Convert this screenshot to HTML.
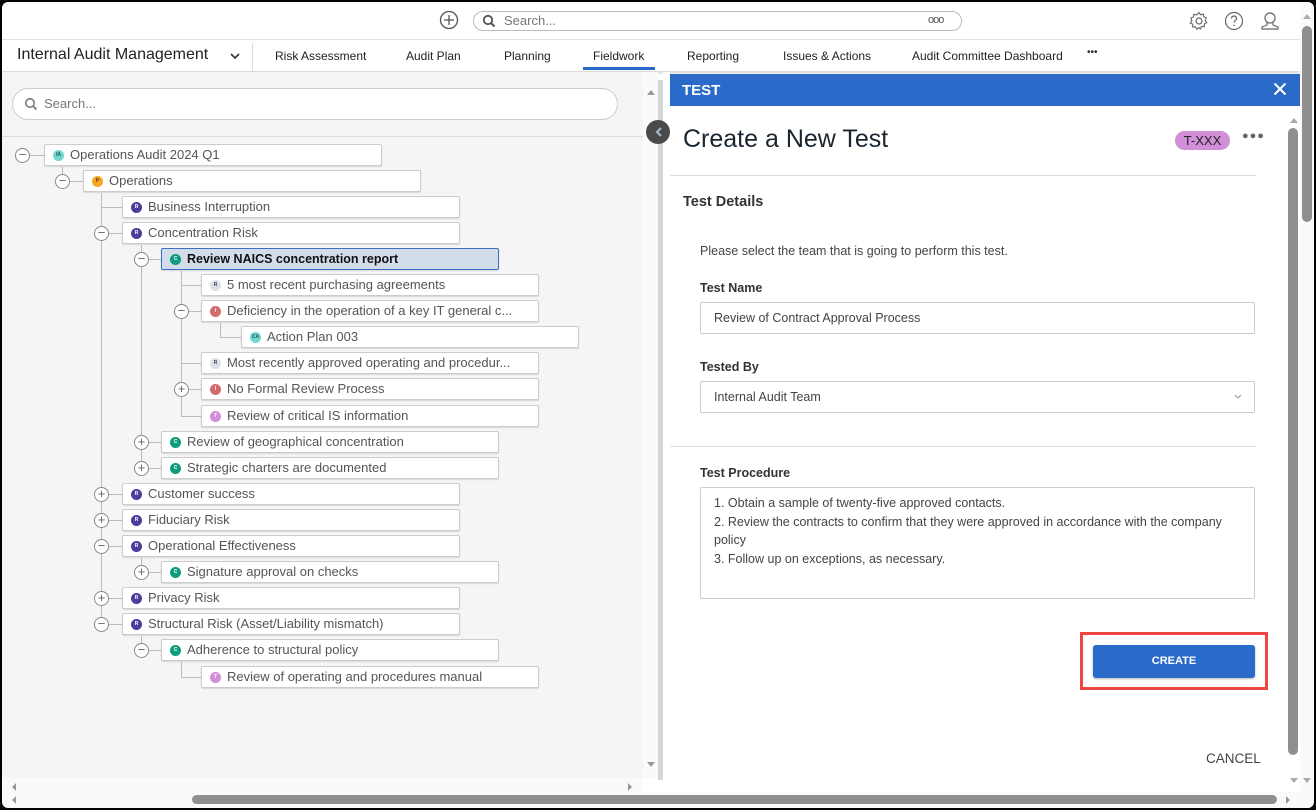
<!DOCTYPE html>
<html><head><meta charset="utf-8"><style>
*{box-sizing:border-box;margin:0;padding:0}
body{width:1316px;height:810px;overflow:hidden;background:#000;font-family:"Liberation Sans",sans-serif;position:relative}
.a{position:absolute}
#win{position:absolute;left:0;top:0;width:1316px;height:810px;background:#fff;overflow:hidden}
#frame{position:absolute;left:0;top:0;width:1316px;height:810px;border:2px solid #000;border-radius:8px;pointer-events:none;box-shadow:0 0 0 3px #000}
.nav span{position:absolute;top:48px;font-size:12px;color:#222}
.box{position:absolute;height:22px;width:338px;background:#fff;border:1px solid #ccc;border-radius:2px;box-shadow:0 1px 1px rgba(0,0,0,.12);font-size:13px;color:#555;line-height:20px;padding-left:25px;white-space:nowrap}
.box i{position:absolute;left:8px;top:5px;width:11px;height:11px;border-radius:50%;font-style:normal;font-size:5px;color:#fff;text-align:center;line-height:11px;font-weight:bold}
.sel{background:#d2dcea;border-color:#3b6fc4;color:#111}
.tg{position:absolute;width:15px;height:15px;border:1px solid #888;border-radius:50%;background:#fff;font-size:13px;line-height:12px;text-align:center;color:#666}
.vl{position:absolute;width:1px;background:#bbb}
.hl{position:absolute;height:1px;background:#bbb}
.lbl{position:absolute;left:700px;font-size:12.5px;font-weight:bold;color:#333}
.inp{position:absolute;left:700px;width:555px;border:1px solid #ccc;border-radius:2px;font-size:12.5px;color:#444;padding-left:13px}
</style></head><body>
<div id="win">
<div class="a" style="left:0;top:0;width:1316px;height:40px;border-bottom:1px solid #e2e2e2"></div>
<svg class="a" style="left:439px;top:10px" width="20" height="20"><circle cx="10" cy="10" r="8.5" fill="none" stroke="#555" stroke-width="1.3"/><path d="M10 5v10M5 10h10" stroke="#555" stroke-width="1.3"/></svg>
<div class="a" style="left:473px;top:11px;width:489px;height:20px;border:1px solid #bbb;border-radius:10px"></div>
<svg class="a" style="left:482px;top:14px" width="14" height="14"><circle cx="6" cy="6" r="4.2" fill="none" stroke="#555" stroke-width="1.8"/><path d="M9 9l3.5 3.5" stroke="#555" stroke-width="2"/></svg>
<div class="a" style="left:504px;top:13px;font-size:13px;color:#777">Search...</div>
<div class="a" style="left:928px;top:14px;font-size:11px;color:#555;letter-spacing:-1px">ooo</div>
<svg class="a" style="left:1189px;top:11px" width="20" height="20"><circle cx="10" cy="10" r="3" fill="none" stroke="#666" stroke-width="1.2"/><path d="M10 1.5l1.6 2.3 2.7-.8.4 2.8 2.6 1-1.1 2.6 1.6 2.3-2.5 1.2.1 2.8-2.8-.2-1.3 2.5L10 16.6l-2.2 1.7-1.3-2.5-2.8.2.1-2.8-2.5-1.2 1.6-2.3L1.8 7l2.6-1 .4-2.8 2.7.8z" fill="none" stroke="#666" stroke-width="1.1"/></svg>
<svg class="a" style="left:1224px;top:11px" width="20" height="20"><circle cx="10" cy="10" r="8.5" fill="none" stroke="#666" stroke-width="1.2"/><path d="M7.5 7.5a2.5 2.5 0 1 1 3.5 2.3c-.8.4-1 .9-1 1.7" fill="none" stroke="#666" stroke-width="1.2"/><circle cx="10" cy="14.3" r=".8" fill="#666"/></svg>
<svg class="a" style="left:1259px;top:10px" width="22" height="22"><circle cx="11" cy="8" r="5" fill="none" stroke="#666" stroke-width="1.2"/><path d="M8 12.5v2.5l-5 2v2h16v-2l-5-2v-2.5" fill="none" stroke="#666" stroke-width="1.2"/></svg>
<div class="a" style="left:0;top:41px;width:1300px;height:30px;background:#fff;box-shadow:0 2px 3px rgba(0,0,0,.18)"></div>
<div class="a" style="left:17px;top:46px;font-size:16px;color:#222">Internal Audit Management</div>
<svg class="a" style="left:229px;top:51px" width="12" height="10"><path d="M2 3l4 4 4-4" fill="none" stroke="#333" stroke-width="1.6"/></svg>
<div class="a" style="left:252px;top:43px;width:1px;height:28px;background:#ddd"></div>
<div class="nav"><span style="left:275px;top:49px">Risk Assessment</span><span style="left:406px;top:49px">Audit Plan</span><span style="left:504px;top:49px">Planning</span><span style="left:593px;top:49px">Fieldwork</span><span style="left:687px;top:49px">Reporting</span><span style="left:783px;top:49px">Issues &amp; Actions</span><span style="left:912px;top:49px">Audit Committee Dashboard</span><span style="left:1087px;font-size:10px;top:47px">•••</span></div>
<div class="a" style="left:583px;top:67px;width:72px;height:3px;background:#2a6ac8"></div>
<div class="a" style="left:0;top:72px;width:643px;height:706px;background:#f5f5f7"></div>
<div class="a" style="left:643px;top:72px;width:15px;height:706px;background:#fafafa"></div>
<div class="a" style="left:658px;top:80px;width:5px;height:700px;background:#d4d7db"></div>
<div class="a" style="left:663px;top:72px;width:7px;height:706px;background:#fff"></div>
<div class="a" style="left:647px;top:90px;width:0;height:0;border-left:4px solid transparent;border-right:4px solid transparent;border-bottom:5px solid #999"></div>
<div class="a" style="left:647px;top:762px;width:0;height:0;border-left:4px solid transparent;border-right:4px solid transparent;border-top:5px solid #999"></div>
<div class="a" style="left:12px;top:88px;width:606px;height:32px;border:1px solid #ccc;border-radius:16px;background:#fff"></div>
<svg class="a" style="left:24px;top:97px" width="14" height="14"><circle cx="6" cy="6" r="4.2" fill="none" stroke="#888" stroke-width="1.8"/><path d="M9 9l3.5 3.5" stroke="#888" stroke-width="2"/></svg>
<div class="a" style="left:44px;top:96px;font-size:13px;color:#777">Search...</div>
<div class="a" style="left:0;top:136px;width:643px;height:1px;background:#ddd"></div>
<div class="a" style="left:646px;top:120px;width:24px;height:24px;border-radius:50%;background:#4a4a4a"></div>
<svg class="a" style="left:653px;top:126px" width="12" height="12"><path d="M8 2L4 6l4 4" fill="none" stroke="#aab4c4" stroke-width="2.2"/></svg>
<div style="position:absolute;left:2px;top:2px;width:700px;height:700px">
<div class="vl" style="left:60px;top:165px;height:14px"></div>
<div class="vl" style="left:99px;top:191px;height:431px"></div>
<div class="vl" style="left:139px;top:243px;height:223px"></div>
<div class="vl" style="left:139px;top:556px;height:14px"></div>
<div class="vl" style="left:139px;top:634px;height:14px"></div>
<div class="vl" style="left:179px;top:269px;height:145px"></div>
<div class="vl" style="left:179px;top:660px;height:15px"></div>
<div class="vl" style="left:218px;top:321px;height:14px"></div>
<div class="hl" style="left:20px;top:153px;width:22px"></div>
<div class="hl" style="left:60px;top:179px;width:22px"></div>
<div class="hl" style="left:99px;top:205px;width:22px"></div><div class="hl" style="left:99px;top:231px;width:22px"></div>
<div class="hl" style="left:139px;top:257px;width:22px"></div>
<div class="hl" style="left:179px;top:283px;width:22px"></div><div class="hl" style="left:179px;top:309px;width:22px"></div>
<div class="hl" style="left:218px;top:335px;width:22px"></div>
<div class="hl" style="left:179px;top:361px;width:22px"></div><div class="hl" style="left:179px;top:387px;width:22px"></div><div class="hl" style="left:179px;top:414px;width:22px"></div>
<div class="hl" style="left:139px;top:440px;width:22px"></div><div class="hl" style="left:139px;top:466px;width:22px"></div>
<div class="hl" style="left:99px;top:492px;width:22px"></div><div class="hl" style="left:99px;top:518px;width:22px"></div><div class="hl" style="left:99px;top:544px;width:22px"></div>
<div class="hl" style="left:139px;top:570px;width:22px"></div>
<div class="hl" style="left:99px;top:596px;width:22px"></div><div class="hl" style="left:99px;top:622px;width:22px"></div>
<div class="hl" style="left:139px;top:648px;width:22px"></div><div class="hl" style="left:179px;top:675px;width:22px"></div>
<div class="tg" style="left:13px;top:146px">−</div>
<div class="tg" style="left:53px;top:172px">−</div>
<div class="tg" style="left:92px;top:224px">−</div>
<div class="tg" style="left:132px;top:250px">−</div>
<div class="tg" style="left:172px;top:302px">−</div>
<div class="tg" style="left:172px;top:380px">+</div>
<div class="tg" style="left:132px;top:433px">+</div>
<div class="tg" style="left:132px;top:459px">+</div>
<div class="tg" style="left:92px;top:485px">+</div>
<div class="tg" style="left:92px;top:511px">+</div>
<div class="tg" style="left:92px;top:537px">−</div>
<div class="tg" style="left:132px;top:563px">+</div>
<div class="tg" style="left:92px;top:589px">+</div>
<div class="tg" style="left:92px;top:615px">−</div>
<div class="tg" style="left:132px;top:641px">−</div>
<div class="box" style="left:42px;top:142px"><i style="background:#6fd8cf;color:#355">IA</i>Operations Audit 2024 Q1</div>
<div class="box" style="left:81px;top:168px"><i style="background:#f5a623;color:#533">P</i>Operations</div>
<div class="box" style="left:120px;top:194px"><i style="background:#4a3d9c">R</i>Business Interruption</div>
<div class="box" style="left:120px;top:220px"><i style="background:#4a3d9c">R</i>Concentration Risk</div>
<div class="box sel" style="left:159px;top:246px;font-weight:bold;font-size:12.5px"><i style="background:#0e9a7e">C</i>Review NAICS concentration report</div>
<div class="box" style="left:199px;top:272px"><i style="background:#dde0e5;color:#446">R</i>5 most recent purchasing agreements</div>
<div class="box" style="left:199px;top:298px"><i style="background:#d46b6b">I</i>Deficiency in the operation of a key IT general c...</div>
<div class="box" style="left:239px;top:324px"><i style="background:#6fd8cf;color:#355">CA</i>Action Plan 003</div>
<div class="box" style="left:199px;top:350px"><i style="background:#dde0e5;color:#446">R</i>Most recently approved operating and procedur...</div>
<div class="box" style="left:199px;top:376px"><i style="background:#d46b6b">I</i>No Formal Review Process</div>
<div class="box" style="left:199px;top:403px"><i style="background:#d08fd6">T</i>Review of critical IS information</div>
<div class="box" style="left:159px;top:429px"><i style="background:#0e9a7e">C</i>Review of geographical concentration</div>
<div class="box" style="left:159px;top:455px"><i style="background:#0e9a7e">C</i>Strategic charters are documented</div>
<div class="box" style="left:120px;top:481px"><i style="background:#4a3d9c">R</i>Customer success</div>
<div class="box" style="left:120px;top:507px"><i style="background:#4a3d9c">R</i>Fiduciary Risk</div>
<div class="box" style="left:120px;top:533px"><i style="background:#4a3d9c">R</i>Operational Effectiveness</div>
<div class="box" style="left:159px;top:559px"><i style="background:#0e9a7e">C</i>Signature approval on checks</div>
<div class="box" style="left:120px;top:585px"><i style="background:#4a3d9c">R</i>Privacy Risk</div>
<div class="box" style="left:120px;top:611px"><i style="background:#4a3d9c">R</i>Structural Risk (Asset/Liability mismatch)</div>
<div class="box" style="left:159px;top:637px"><i style="background:#0e9a7e">C</i>Adherence to structural policy</div>
<div class="box" style="left:199px;top:664px"><i style="background:#d08fd6">T</i>Review of operating and procedures manual</div>
</div>
<div class="a" style="left:0;top:778px;width:643px;height:14px;background:#fafafa"></div>
<div class="a" style="left:12px;top:783px;border-top:4px solid transparent;border-bottom:4px solid transparent;border-right:4px solid #999"></div>
<div class="a" style="left:628px;top:783px;border-top:4px solid transparent;border-bottom:4px solid transparent;border-left:4px solid #999"></div>
<div class="a" style="left:670px;top:74px;width:630px;height:32px;background:#2a6ac8"></div>
<div class="a" style="left:682px;top:82px;color:#fff;font-weight:bold;font-size:15px">TEST</div>
<svg class="a" style="left:1273px;top:82px" width="14" height="14"><path d="M1.5 1.5l11 11M12.5 1.5l-11 11" stroke="#fff" stroke-width="2"/></svg>
<div class="a" style="left:683px;top:125px;font-size:25px;color:#1a2530">Create a New Test</div>
<div class="a" style="left:1175px;top:131px;width:55px;height:19px;background:#d08fd6;border-radius:10px;font-size:13px;color:#222;text-align:center;line-height:19px">T-XXX</div>
<div class="a" style="left:1242px;top:130px;font-size:11px;color:#666;letter-spacing:1px">●●●</div>
<div class="a" style="left:670px;top:175px;width:586px;height:1px;background:#ddd"></div>
<div class="a" style="left:683px;top:194px;font-size:14.5px;font-weight:bold;color:#333">Test Details</div>
<div class="a" style="left:700px;top:244px;font-size:12.5px;color:#444">Please select the team that is going to perform this test.</div>
<div class="lbl" style="top:281px">Test Name</div>
<div class="inp" style="top:302px;height:32px;line-height:30px">Review of Contract Approval Process</div>
<div class="lbl" style="top:360px">Tested By</div>
<div class="inp" style="top:381px;height:32px;line-height:30px">Internal Audit Team</div>
<svg class="a" style="left:1233px;top:393px" width="10" height="8"><path d="M2 2l3 3 3-3" fill="none" stroke="#999" stroke-width="1"/></svg>
<div class="a" style="left:670px;top:446px;width:586px;height:1px;background:#ddd"></div>
<div class="lbl" style="top:466px">Test Procedure</div>
<div class="inp" style="top:487px;height:112px;line-height:18.5px;padding-top:6px;padding-right:10px">1. Obtain a sample of twenty-five approved contacts.<br>2. Review the contracts to confirm that they were approved in accordance with the company policy<br>3. Follow up on exceptions, as necessary.</div>
<div class="a" style="left:1080px;top:632px;width:188px;height:58px;border:3px solid #f04545"></div>
<div class="a" style="left:1093px;top:645px;width:162px;height:33px;background:#2a6ac8;border-radius:3px;color:#fff;font-size:11px;font-weight:bold;text-align:center;line-height:33px;box-shadow:0 1px 2px rgba(0,0,0,.3)">CREATE</div>
<div class="a" style="left:1206px;top:751px;font-size:13.5px;color:#444">CANCEL</div>
<div class="a" style="left:1290px;top:118px;border-left:4px solid transparent;border-right:4px solid transparent;border-bottom:5px solid #aaa"></div>
<div class="a" style="left:1288px;top:128px;width:10px;height:627px;background:#8f8f8f;border-radius:5px"></div>
<div class="a" style="left:1290px;top:778px;border-left:4px solid transparent;border-right:4px solid transparent;border-top:5px solid #aaa"></div>
<div class="a" style="left:1300px;top:0;width:16px;height:810px;background:#fafafa"></div>
<div class="a" style="left:1303px;top:14px;border-left:4px solid transparent;border-right:4px solid transparent;border-bottom:5px solid #aaa"></div>
<div class="a" style="left:1302px;top:26px;width:10px;height:196px;background:#8f8f8f;border-radius:5px"></div>
<div class="a" style="left:1303px;top:778px;border-left:4px solid transparent;border-right:4px solid transparent;border-top:5px solid #aaa"></div>
<div class="a" style="left:0;top:792px;width:1300px;height:18px;background:#fafafa"></div>
<div class="a" style="left:12px;top:796px;border-top:4px solid transparent;border-bottom:4px solid transparent;border-right:4px solid #999"></div>
<div class="a" style="left:192px;top:795px;width:1085px;height:9px;background:#8f8f8f;border-radius:5px"></div>
<div class="a" style="left:1286px;top:796px;border-top:4px solid transparent;border-bottom:4px solid transparent;border-left:4px solid #999"></div>
</div>
<div id="frame"></div>
</body></html>
